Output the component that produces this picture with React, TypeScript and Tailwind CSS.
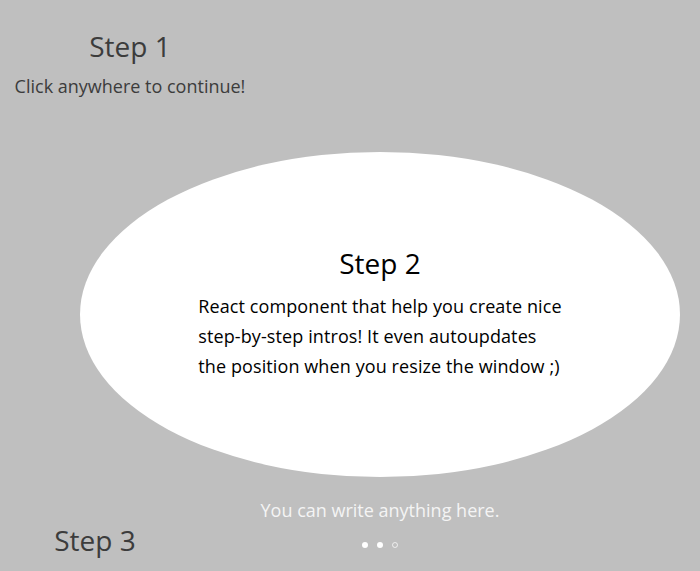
import React from 'react';

const App: React.FC = () => {
  return (
    <div
      className="w-[700px] h-[571px] overflow-hidden bg-[#bfbfbf] flex flex-col"
      style={{ fontFamily: '"Open Sans", "Noto Sans", sans-serif' }}
    >
      <div className="w-[260px] pt-[27px] text-center text-[#3c3c3c]">
        <h1 className="text-[28px] leading-[38px] font-medium">Step 1</h1>
        <p className="mt-[8px] text-[18px] leading-[26px]">Click anywhere to continue!</p>
      </div>

      <div className="ml-[80px] mt-[53px] w-[600px] h-[325px] pb-[5px] rounded-[50%] bg-white flex flex-col items-center justify-center text-black">
        <h2 className="text-[28px] leading-[38px] font-medium">Step 2</h2>
        <p className="mt-[9px] text-[18px] leading-[30px] tracking-[0.1px]">
          React component that help you create nice
          <br />
          step-by-step intros! It even autoupdates
          <br />
          the position when you resize the window ;)
        </p>
      </div>

      <div className="flex items-start">
        <div className="w-[190px] pt-[44px] text-center text-[#3c3c3c]">
          <h3 className="text-[28px] leading-[38px] font-medium">Step 3</h3>
        </div>
        <div className="w-[380px] pt-[20px] flex flex-col items-center">
          <p className="text-[18px] leading-[26px] text-[#f4f4f4]">You can write anything here.</p>
          <div className="mt-[19px] flex gap-[9px]">
            <span className="w-[6px] h-[6px] rounded-full bg-white" />
            <span className="w-[6px] h-[6px] rounded-full bg-white" />
            <span className="w-[6px] h-[6px] rounded-full border border-white/70" />
          </div>
        </div>
      </div>
    </div>
  );
};

export default App;
